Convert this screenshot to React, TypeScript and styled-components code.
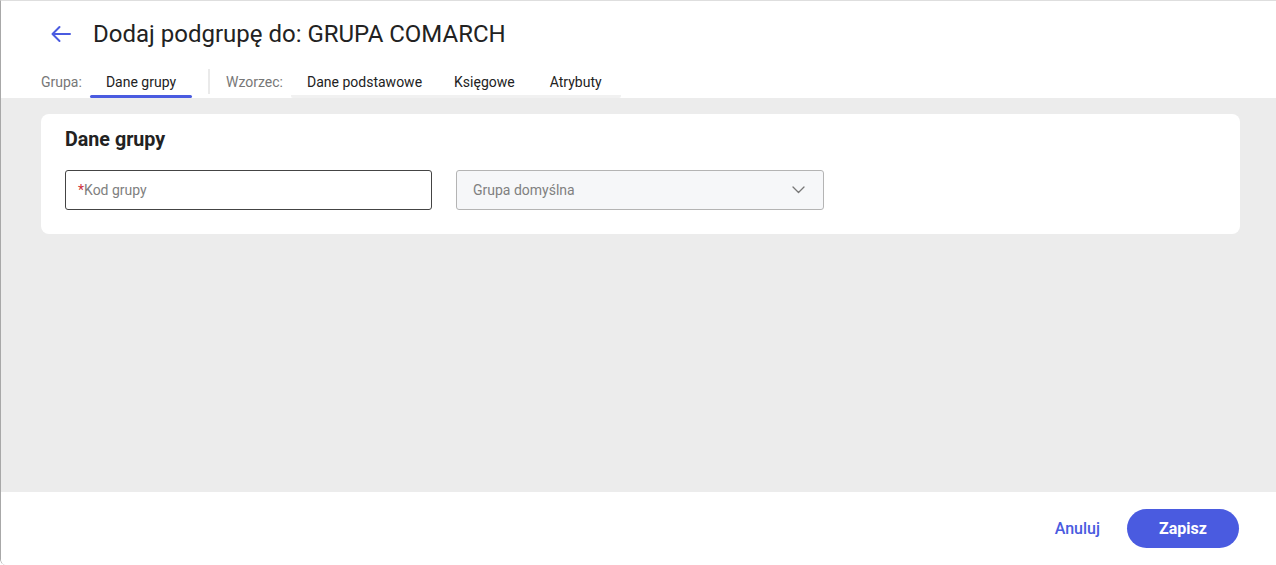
import React from 'react'
import styled, { createGlobalStyle } from 'styled-components'

const GlobalStyle = createGlobalStyle`
  html, body {
    margin: 0;
    padding: 0;
    height: 100%;
  }
  body {
    font-family: Roboto, 'Liberation Sans', Arial, sans-serif;
    background: #fff;
  }
  #root {
    height: 100%;
  }
`

const PRIMARY = '#4a5be0'

export default function App() {
  return (
    <>
      <GlobalStyle />
      <Frame>
        <Header>
          <TitleRow>
            <BackButton aria-label='wstecz'>
              <svg width='22' height='18' viewBox='0 0 22 18' fill='none'>
                <path
                  d='M20 9H3M9.5 2L2.5 9l7 7'
                  stroke={PRIMARY}
                  strokeWidth='2'
                  strokeLinecap='round'
                  strokeLinejoin='round'
                />
              </svg>
            </BackButton>
            <Title>Dodaj podgrupę do: GRUPA COMARCH</Title>
          </TitleRow>
          <TabsRow>
            <TabLabel>Grupa:</TabLabel>
            <TabGroup>
              <Tab active>Dane grupy</Tab>
            </TabGroup>
            <Divider />
            <TabLabel>Wzorzec:</TabLabel>
            <TabGroup muted>
              <Tab>Dane podstawowe</Tab>
              <Tab>Księgowe</Tab>
              <Tab>Atrybuty</Tab>
            </TabGroup>
          </TabsRow>
        </Header>
        <Content>
          <Card>
            <CardTitle>Dane grupy</CardTitle>
            <FieldsRow>
              <Field>
                <Placeholder>
                  <Required>*</Required>Kod grupy
                </Placeholder>
              </Field>
              <Field disabled>
                <Placeholder>Grupa domyślna</Placeholder>
                <svg width='13' height='8' viewBox='0 0 13 8' fill='none'>
                  <path d='M1 1l5.5 5.5L12 1' stroke='#777' strokeWidth='1.3' strokeLinecap='round' strokeLinejoin='round' />
                </svg>
              </Field>
            </FieldsRow>
          </Card>
        </Content>
        <Footer>
          <TextButton>Anuluj</TextButton>
          <PrimaryButton>Zapisz</PrimaryButton>
        </Footer>
      </Frame>
    </>
  )
}

const Frame = styled.div`
  height: 565px;
  box-sizing: border-box;
  display: flex;
  flex-direction: column;
  border-top: 1px solid #dedede;
  border-left: 1px solid #a8a8a8;
  border-bottom-left-radius: 6px;
  overflow: hidden;
  background: #fff;
`

const Header = styled.div`
  background: #fff;
  padding: 0 0 0 40px;
`

const TitleRow = styled.div`
  display: flex;
  align-items: center;
  height: 66px;
  padding-left: 8px;
  gap: 20px;
`

const BackButton = styled.button`
  border: none;
  background: transparent;
  padding: 0;
  width: 24px;
  height: 24px;
  display: flex;
  align-items: center;
  justify-content: center;
  cursor: pointer;
`

const Title = styled.h1`
  margin: 0;
  font-size: 24px;
  font-weight: 400;
  color: #222;
  letter-spacing: 0;
`

const TabsRow = styled.div`
  display: flex;
  align-items: stretch;
  height: 31px;
`

const TabLabel = styled.span`
  font-size: 14px;
  color: #777;
  display: flex;
  align-items: center;
  padding-bottom: 2px;
  margin-right: 8px;
`

const TabGroup = styled.div<{ muted?: boolean }>`
  display: flex;
  border-bottom: 3px solid ${(p) => (p.muted ? '#f1f1f1' : 'transparent')};
  border-bottom-left-radius: 2px;
  border-bottom-right-radius: 2px;
`

const Tab = styled.div<{ active?: boolean }>`
  position: relative;
  min-width: 90px;
  box-sizing: border-box;
  font-size: 14px;
  color: #222;
  display: flex;
  align-items: center;
  justify-content: center;
  padding: 0 16px 2px;
  margin-bottom: -3px;
  cursor: pointer;
  &::after {
    content: '';
    position: absolute;
    left: 0;
    right: 0;
    bottom: 0;
    height: 3px;
    border-radius: 2px;
    background: ${(p) => (p.active ? PRIMARY : 'transparent')};
  }
`

const Divider = styled.div`
  width: 2px;
  background: #eaeaea;
  margin: 2px 16px 4px 16px;
`

const Content = styled.div`
  flex: 1;
  background: #ececec;
  padding: 16px 36px 0 40px;
`

const Card = styled.div`
  background: #fff;
  border-radius: 8px;
  padding: 14px 24px 24px;
`

const CardTitle = styled.h2`
  margin: 0 0 18px;
  font-size: 19.7px;
  font-weight: 700;
  color: #222;
  line-height: 24px;
`

const FieldsRow = styled.div`
  display: flex;
  gap: 24px;
`

const Field = styled.div<{ disabled?: boolean }>`
  width: 367px;
  height: 40px;
  box-sizing: border-box;
  display: flex;
  align-items: center;
  justify-content: space-between;
  padding: 0 18px 0 12px;
  border: 1px solid ${(p) => (p.disabled ? '#b4b4b4' : '#444')};
  border-radius: 3px;
  background: ${(p) => (p.disabled ? '#f6f7f9' : '#fff')};
  ${(p) => (p.disabled ? 'padding-left: 16px; width: 368px;' : '')}
`

const Placeholder = styled.span`
  font-size: 14px;
  color: #808080;
`

const Required = styled.span`
  color: #d0323c;
`

const Footer = styled.div`
  height: 73px;
  background: #fff;
  display: flex;
  align-items: center;
  justify-content: flex-end;
  gap: 27px;
  padding: 0 37px 0 0;
`

const TextButton = styled.button`
  border: none;
  background: transparent;
  color: ${PRIMARY};
  font-family: inherit;
  font-size: 16px;
  font-weight: 500;
  padding: 0;
  cursor: pointer;
`

const PrimaryButton = styled.button`
  border: none;
  background: ${PRIMARY};
  color: #fff;
  font-family: inherit;
  font-size: 16px;
  font-weight: 700;
  width: 112px;
  height: 39px;
  border-radius: 20px;
  cursor: pointer;
`
